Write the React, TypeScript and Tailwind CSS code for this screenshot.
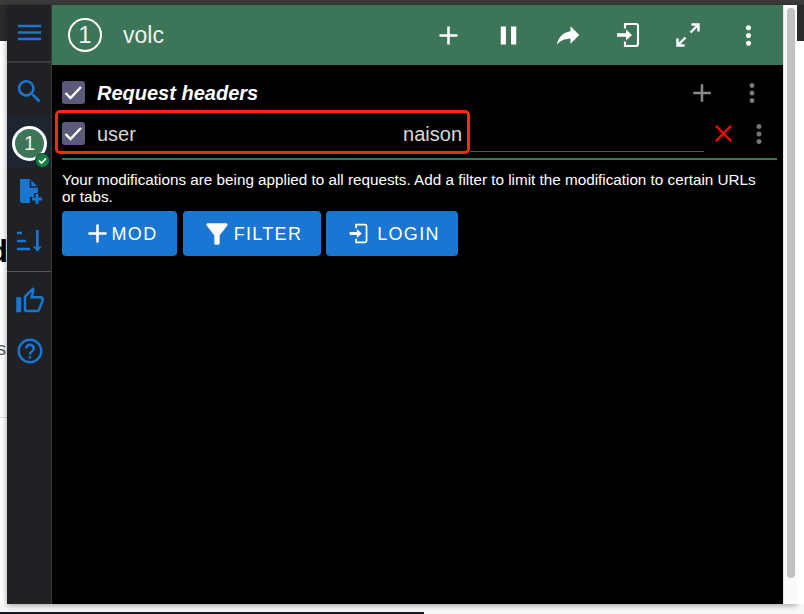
import React from "react";

// Material-style glyphs used across the popup
const ICONS = {
  menu: "M3 18h18v-2H3v2zm0-5h18v-2H3v2zm0-7v2h18V6H3z",
  search:
    "M15.5 14h-.79l-.28-.27C15.41 12.59 16 11.11 16 9.5 16 5.91 13.09 3 9.5 3S3 5.91 3 9.5 5.91 16 9.5 16c1.61 0 3.09-.59 4.23-1.57l.27.28v.79l5 4.99L20.49 19l-4.99-5zm-6 0C7.01 14 5 11.99 5 9.5S7.01 5 9.5 5 14 7.01 14 9.5 11.99 14 9.5 14z",
  thumb:
    "M9 21h9c.83 0 1.54-.5 1.84-1.22l3.02-7.05c.09-.23.14-.47.14-.73v-2c0-1.1-.9-2-2-2h-6.31l.95-4.57.03-.32c0-.41-.17-.79-.44-1.06L14.17 1 7.58 7.59C7.22 7.95 7 8.45 7 9v10c0 1.1.9 2 2 2zM9 9l4.34-4.34L12 10h9v2l-3 7H9V9zM1 9h4v12H1z",
  help: "M11 18h2v-2h-2v2zm1-16C6.48 2 2 6.48 2 12s4.48 10 10 10 10-4.48 10-10S17.52 2 12 2zm0 18c-4.41 0-8-3.59-8-8s3.59-8 8-8 8 3.59 8 8-3.59 8-8 8zm0-14c-2.21 0-4 1.79-4 4h2c0-1.1.9-2 2-2s2 .9 2 2c0 2-3 1.75-3 5h2c0-2.25 3-2.5 3-5 0-2.21-1.79-4-4-4z",
  add: "M19 13h-6v6h-2v-6H5v-2h6V5h2v6h6v2z",
  pause: "M6 19h4V5H6v14zm8-14v14h4V5h-4z",
  forward: "M14 9V5l7 7-7 7v-4.1c-5 0-8.5 1.6-11 5.1 1-5 4-10 11-11z",
  more: "M12 8c1.1 0 2-.9 2-2s-.9-2-2-2-2 .9-2 2 .9 2 2 2zm0 2c-1.1 0-2 .9-2 2s.9 2 2 2 2-.9 2-2-.9-2-2-2zm0 6c-1.1 0-2 .9-2 2s.9 2 2 2 2-.9 2-2-.9-2-2-2z",
  filter: "M4.25 5.61C6.27 8.2 10 13 10 13v6c0 .55.45 1 1 1h2c.55 0 1-.45 1-1v-6s3.72-4.8 5.74-7.39c.51-.66.04-1.61-.79-1.61H5.04c-.83 0-1.3.95-.79 1.61z",
  close: "M19 6.41 17.59 5 12 10.59 6.41 5 5 6.41 10.59 12 5 17.59 6.41 19 12 13.41 17.59 19 19 17.59 13.41 12z",
};

function Icon({ d, className }: { d: string; className: string }) {
  return (
    <svg viewBox="0 0 24 24" fill="currentColor" className={className}>
      <path d={d} />
    </svg>
  );
}

function LoginIcon({ className }: { className: string }) {
  return (
    <svg viewBox="0 0 36 36" fill="none" className={className}>
      <path d="M15 11.5V7h11a2 2 0 0 1 2 2v18a2 2 0 0 1-2 2H15v-4.5" stroke="#fff" strokeWidth="2.1" />
      <path d="M7 16.2h9v-3.7l6 5.5-6 5.5v-3.7H7z" fill="#fff" />
    </svg>
  );
}

function Check() {
  return (
    <div className="w-[23px] h-[23px] shrink-0 rounded-[3px] bg-[#5c5a7a] flex items-center justify-center">
      <svg viewBox="0 0 23 23" fill="none" className="w-[23px] h-[23px]">
        <path d="M3.5 12l5 5L19 6" stroke="#fff" strokeWidth="2.4" />
      </svg>
    </div>
  );
}

function SideCell({ className, children }: { className: string; children: React.ReactNode }) {
  return <div className={`flex items-center justify-center pl-[1px] text-[#1976d2] ${className}`}>{children}</div>;
}

function Sidebar() {
  return (
    <div className="w-[45px] shrink-0 bg-[#202124] border-r border-[#3a3a3d] flex flex-col">
      <SideCell className="h-[58px] border-b-2 border-[#3c3c3f]">
        <Icon d={ICONS.menu} className="w-[31px] h-[31px] -mt-[2px]" />
      </SideCell>
      <SideCell className="h-[54px]">
        <Icon d={ICONS.search} className="w-[31px] h-[31px] mt-[2px]" />
      </SideCell>
      <SideCell className="h-[50px] bg-[#1c2530] relative">
        <div className="w-[35px] h-[35px] mt-[2px] rounded-full border-[3px] border-white bg-[#3d7558] text-[#f0f0f0] flex items-center justify-center text-[20px]">
          1
        </div>
        <div className="absolute left-[28px] top-[36px] w-[15px] h-[15px] rounded-full bg-[#15803d] border border-[#1c2530] flex items-center justify-center">
          <svg viewBox="0 0 15 15" fill="none" className="w-[13px] h-[13px]">
            <path d="M3.5 7.5l3 3 5-5.5" stroke="#fff" strokeWidth="1.9" />
          </svg>
        </div>
      </SideCell>
      <SideCell className="h-[49px]">
        <svg viewBox="0 0 28 28" fill="none" className="w-[28px] h-[28px] ml-[3px]">
          <path d="M3 1h10l8 8v6h-4v4h-4v6H5c-1.2 0-2-.8-2-2V1z" fill="currentColor" />
          <path d="M13.5 1.5v7.5h7.5" stroke="#202124" strokeWidth="1.6" />
          <path d="M20 16v10M15 21h10" stroke="currentColor" strokeWidth="2.8" />
        </svg>
      </SideCell>
      <SideCell className="h-[50px]">
        <svg viewBox="0 0 25 22" fill="none" stroke="currentColor" strokeWidth="2.6" className="w-[25px] h-[22px]">
          <path d="M0 3h5M0 11h9M0 19h13" />
          <path d="M20.3 0v21" />
          <path d="M15.8 16.5h9l-4.5 5z" fill="currentColor" stroke="none" />
        </svg>
      </SideCell>
      <div className="h-[5px] border-b border-[#55555a] box-content" />
      <div className="h-[4px]" />
      <SideCell className="h-[50px]">
        <Icon d={ICONS.thumb} className="w-[30px] h-[30px]" />
      </SideCell>
      <SideCell className="h-[50px]">
        <Icon d={ICONS.help} className="w-[30px] h-[30px]" />
      </SideCell>
    </div>
  );
}

function HeaderSlot({ children }: { children: React.ReactNode }) {
  return <div className="w-[60px] flex items-center justify-center">{children}</div>;
}

function Header() {
  return (
    <div className="h-[60px] shrink-0 bg-[#3d7558] flex items-center text-white pl-[16px]">
      <div className="w-[34px] h-[34px] rounded-full border-2 border-white flex items-center justify-center text-[24px] text-[#f0f0f0]">
        1
      </div>
      <div className="ml-[21px] text-[23px] text-[#f0f0f0] flex-1">volc</div>
      <div className="flex items-center pr-[5px]">
        <HeaderSlot>
          <Icon d={ICONS.add} className="w-[31px] h-[31px]" />
        </HeaderSlot>
        <HeaderSlot>
          <Icon d={ICONS.pause} className="w-[31px] h-[31px]" />
        </HeaderSlot>
        <HeaderSlot>
          <Icon d={ICONS.forward} className="w-[30px] h-[30px]" />
        </HeaderSlot>
        <HeaderSlot>
          <LoginIcon className="w-[36px] h-[36px]" />
        </HeaderSlot>
        <HeaderSlot>
          <svg viewBox="0 0 36 36" fill="none" className="w-[36px] h-[36px]">
            <path d="M20.5 15.5l8-8M21.5 7.5H28.5V14.5M15.5 20.5l-8 8M7.5 21.5V28.5H14.5" stroke="#fff" strokeWidth="2.4" />
          </svg>
        </HeaderSlot>
        <HeaderSlot>
          <Icon d={ICONS.more} className="w-[31px] h-[31px]" />
        </HeaderSlot>
      </div>
    </div>
  );
}

function ActionButton({ icon, label, width }: { icon: React.ReactNode; label: string; width: string }) {
  return (
    <div className={`${width} h-[45px] rounded-[4px] bg-[#1976d2] text-white flex items-center justify-center text-[18px] tracking-[1.3px]`}>
      {icon}
      <span className="mt-[1px]">{label}</span>
    </div>
  );
}

function Body() {
  return (
    <div className="flex-1 bg-black text-white pl-[10px]">
      <div className="h-[47px] flex items-end">
        <div className="h-[39px] w-full flex items-center">
          <Check />
          <div className="ml-[12px] flex-1 text-[20px] font-bold italic">Request headers</div>
          <Icon d={ICONS.add} className="w-[30px] h-[30px] text-[#8a8a8a] mr-[20px]" />
          <Icon d={ICONS.more} className="w-[30px] h-[30px] text-[#777] mr-[16px]" />
        </div>
      </div>
      <div className="h-[39px] mt-[2px] flex items-center">
        <Check />
        <div className="ml-[12px] w-[365px] flex justify-between text-[20px] text-[#d8d8d8]">
          <span>user</span>
          <span>naison</span>
        </div>
        <div className="ml-[8px] w-[234px] h-[37px] border-b border-[#555]" />
        <Icon d={ICONS.close} className="w-[29px] h-[29px] text-[#ff0000] ml-[5px]" />
        <Icon d={ICONS.more} className="w-[30px] h-[30px] text-[#777] ml-[6px]" />
      </div>
      <div className="h-[2px] mt-[5px] mr-[6px] bg-[#3d7558]" />
      <p className="mt-[11px] mr-[20px] text-[15.25px] leading-[17px]">
        Your modifications are being applied to all requests. Add a filter to limit the modification to certain URLs
        or tabs.
      </p>
      <div className="mt-[6px] flex gap-[5.5px]">
        <ActionButton
          width="w-[115px]"
          label="MOD"
          icon={<Icon d={ICONS.add} className="w-[31px] h-[31px] mr-[-1px]" />}
        />
        <ActionButton
          width="w-[138px]"
          label="FILTER"
          icon={<Icon d={ICONS.filter} className="w-[32px] h-[32px] mr-[1px]" />}
        />
        <ActionButton
          width="w-[132px]"
          label="LOGIN"
          icon={<LoginIcon className="w-[29px] h-[29px] mr-[4px]" />}
        />
      </div>
    </div>
  );
}

export default function App() {
  return (
    <div className="w-[804px] h-[614px] relative overflow-hidden bg-[#f7f7f7] font-['Liberation_Sans',sans-serif]">
      <div className="h-[5px] bg-[#3b3b3b]" />
      <div className="flex h-[599px]">
        <div className="w-[7px] shrink-0 flex flex-col">
          <div className="h-[36px] bg-[#2a2a2a]" />
          <div className="flex-1 bg-white overflow-hidden flex flex-col items-end">
            <span className="mt-[192px] text-[32px] font-bold leading-[36px] text-black -mr-[1px]">d</span>
            <span className="mt-[70px] text-[18px] leading-[20px] text-[#555] mr-[1px]">s</span>
            <div className="mt-[58px] w-full h-px bg-[#ddd]" />
          </div>
        </div>
        <div className="flex flex-1 shadow-[0_1px_6px_rgba(0,0,0,0.4)]">
          <Sidebar />
          <div className="flex-1 flex flex-col">
            <Header />
            <Body />
          </div>
          <div className="w-[14px] shrink-0 bg-[#fafafa] border-l border-[#e5e5e5] pt-[3px] pl-[3px]">
            <div className="w-[8px] h-[570px] rounded-full bg-[#c1c1c1]" />
          </div>
        </div>
        <div className="w-[7px] shrink-0 flex flex-col">
          <div className="h-[36px] bg-[#2a2a2a]" />
          <div className="flex-1 bg-white" />
        </div>
      </div>
      <div className="mt-[8px] w-[424px] h-[2px] bg-[#16162a]" />
      {/* red annotation drawn over the screenshot */}
      <div className="absolute left-[55px] top-[110px] w-[415px] h-[44px] rounded-[5px] border-[3px] border-[#fb2a0a]" />
    </div>
  );
}
